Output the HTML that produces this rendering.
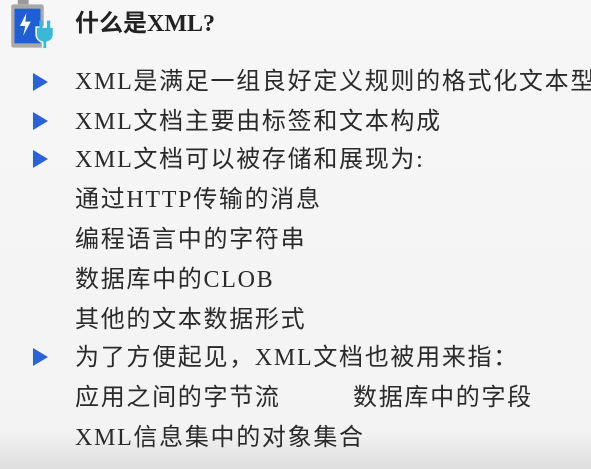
<!DOCTYPE html>
<html><head><meta charset="utf-8"><style>
html,body{margin:0;padding:0}
body{width:591px;height:469px;overflow:hidden;position:relative;background:linear-gradient(180deg,#f7f7f7 0%,#f3f3f3 92%,#dedede 100%);font-family:"Liberation Serif","Noto Sans CJK SC",serif;color:#2a2a2a}
.l{position:absolute;left:75px;font-size:24px;letter-spacing:1.7px;line-height:30px;white-space:nowrap}
.t{position:absolute;left:33px;width:0;height:0;border-top:9px solid transparent;border-bottom:9px solid transparent;border-left:15px solid #2a62d8}
.title{position:absolute;left:75px;top:9px;font-size:24px;font-weight:bold;color:#222;line-height:30px;font-family:"Liberation Serif","Noto Sans CJK SC",serif}
</style></head><body>
<svg style="position:absolute;left:8px;top:0px" width="52" height="52" viewBox="0 0 48 48">
<rect x="9" y="0" width="10" height="4" fill="#999"/>
<rect x="3" y="4" width="30" height="40" rx="2" fill="#a9a9a9"/>
<rect x="6" y="8" width="24" height="32" fill="#1f5fd6"/>
<path d="M17 12 L11 24 L16 24 L14 33 L21 20 L16 20 Z" fill="#fff"/>
<path d="M26 25 h16 v8 a8 8 0 0 1 -6 6 v6 h-4 v-6 a8 8 0 0 1 -6 -6z" fill="#3bb8d8" stroke="#e8f6fa" stroke-width="1.5"/>
<rect x="29" y="19" width="3" height="7" fill="#3bb8d8"/><rect x="36" y="19" width="3" height="7" fill="#3bb8d8"/>
</svg>
<div class="title">什么是XML?</div>
<div class="t" style="top:73px"></div>
<div class="t" style="top:112px"></div>
<div class="t" style="top:150px"></div>
<div class="t" style="top:348px"></div>
<div class="l" style="top:67px">XML是满足一组良好定义规则的格式化文本型</div>
<div class="l" style="top:107px">XML文档主要由标签和文本构成</div>
<div class="l" style="top:145px">XML文档可以被存储和展现为:</div>
<div class="l" style="top:185px">通过HTTP传输的消息</div>
<div class="l" style="top:225px">编程语言中的字符串</div>
<div class="l" style="top:265px">数据库中的CLOB</div>
<div class="l" style="top:305px">其他的文本数据形式</div>
<div class="l" style="top:343px">为了方便起见，XML文档也被用来指：</div>
<div class="l" style="top:383px">应用之间的字节流</div>
<div class="l" style="top:383px;left:353px">数据库中的字段</div>
<div class="l" style="top:423px">XML信息集中的对象集合</div>
</body></html>
